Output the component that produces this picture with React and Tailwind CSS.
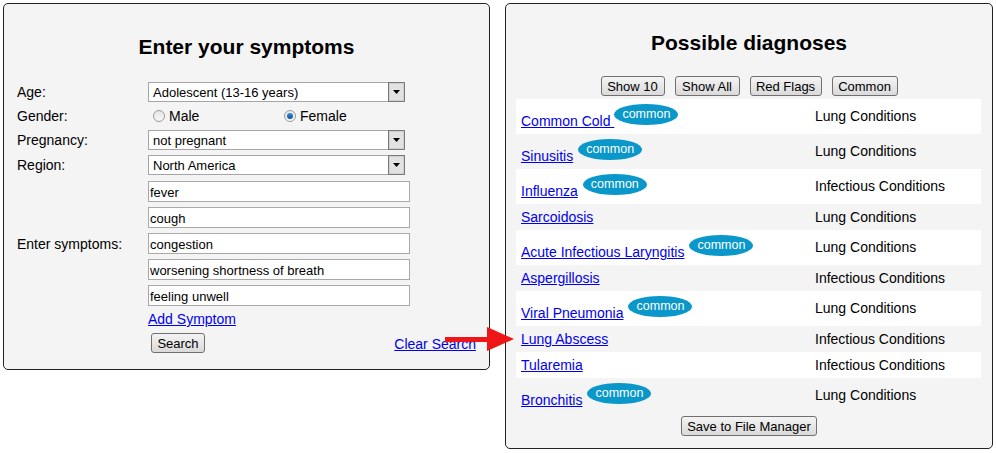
import React from "react";

const rows = [
  { n: "Common Cold\u00a0", c: true, cat: "Lung Conditions", tight: true },
  { n: "Sinusitis", c: true, cat: "Lung Conditions" },
  { n: "Influenza", c: true, cat: "Infectious Conditions" },
  { n: "Sarcoidosis", cat: "Lung Conditions" },
  { n: "Acute Infectious Laryngitis", c: true, cat: "Lung Conditions" },
  { n: "Aspergillosis", cat: "Infectious Conditions" },
  { n: "Viral Pneumonia", c: true, cat: "Lung Conditions" },
  { n: "Lung Abscess", cat: "Infectious Conditions" },
  { n: "Tularemia", cat: "Infectious Conditions" },
  { n: "Bronchitis", c: true, cat: "Lung Conditions" },
];

function Btn({ children, w }) {
  return (
    <div
      className={`flex h-[20px] items-center justify-center rounded-[3px] border border-[#707070] bg-gradient-to-b from-[#f4f4f4] to-[#dadada] text-[13px] leading-none text-black ${w}`}
    >
      {children}
    </div>
  );
}

function Select({ value }) {
  return (
    <div className="flex h-[20px] w-[257px] items-center border border-[#a5a5a5] bg-white">
      <div className="flex-1 pl-[4px] text-[13px] leading-none text-black">{value}</div>
      <div className="-my-px -mr-px flex h-[20px] w-[17px] items-center justify-center border border-[#7a7a7a] bg-[#e2e2e2] shadow-[inset_0_0_0_1px_#cfcfcf]">
        <svg width="7" height="4" viewBox="0 0 7 4">
          <polygon points="0,0 7,0 3.5,4" fill="#000" />
        </svg>
      </div>
    </div>
  );
}

function Input({ value }) {
  return (
    <div className="flex h-[21px] w-[262px] items-center border border-[#a9a9a9] bg-white pl-[1px] pt-[1px] text-[13px] leading-none text-black">
      {value}
    </div>
  );
}

function Radio({ checked }) {
  return (
    <span className="flex h-[12px] w-[12px] items-center justify-center rounded-full border border-[#9a9a9a] bg-gradient-to-b from-[#e6e6e6] to-[#f8f8f8]">
      {checked && (
        <span className="h-[6px] w-[6px] rounded-full bg-gradient-to-b from-[#3a8fd6] to-[#0d4f95]" />
      )}
    </span>
  );
}

function Label({ children }) {
  return <div className="w-[131px] text-[14px] leading-[16px] text-black">{children}</div>;
}

export default function App() {
  return (
    <div className="relative flex h-[453px] w-[996px] gap-[15px] bg-white pl-[3px] pt-[3px] font-['Liberation_Sans',Arial,sans-serif]">
      {/* Left panel */}
      <div className="h-[367px] w-[487px] rounded-[5px] border border-[#222] bg-[#f4f4f4] pl-[13px] pr-[13px] pt-[31px]">
        <div className="text-center text-[21px] font-bold leading-[24px] text-black">Enter your symptoms</div>
        <div className="mt-[23px] flex items-center">
          <Label>Age:</Label>
          <Select value="Adolescent (13-16 years)" />
        </div>
        <div className="flex h-[28px] items-center">
          <Label>Gender:</Label>
          <div className="flex w-[131px] items-center gap-[4px] pl-[5px] text-[14px] leading-[16px]">
            <Radio />
            <span>Male</span>
          </div>
          <div className="flex items-center gap-[4px] pl-[5px] text-[14px] leading-[16px]">
            <Radio checked />
            <span>Female</span>
          </div>
        </div>
        <div className="flex items-center">
          <Label>Pregnancy:</Label>
          <Select value="not pregnant" />
        </div>
        <div className="mt-[5px] flex items-center">
          <Label>Region:</Label>
          <Select value="North America" />
        </div>
        <div className="mt-[6px] flex items-center">
          <Label>Enter symptoms:</Label>
          <div className="flex flex-col gap-[5px]">
            <Input value="fever" />
            <Input value="cough" />
            <Input value="congestion" />
            <Input value="worsening shortness of breath" />
            <Input value="feeling unwell" />
          </div>
        </div>
        <div className="ml-[131px] mt-[5px] text-[14px] leading-[16px]">
          <a className="text-[#0000ee] underline">Add Symptom</a>
        </div>
        <div className="ml-[131px] mt-[6px] flex items-center justify-between">
          <div className="ml-[3px]">
            <Btn w="w-[54px]">Search</Btn>
          </div>
          <a className="mt-[1px] text-[14px] leading-[16px] text-[#0000ee] underline">Clear Search</a>
        </div>
      </div>

      {/* Right panel */}
      <div className="h-[446px] w-[488px] rounded-[5px] border border-[#222] bg-[#f4f4f4] pl-[10px] pr-[10px] pt-[27px]">
        <div className="text-center text-[21px] font-bold leading-[24px] text-black">Possible diagnoses</div>
        <div className="mt-[21px] flex justify-center gap-[10px]">
          <Btn w="w-[64px]">Show 10</Btn>
          <Btn w="w-[65px]">Show All</Btn>
          <Btn w="w-[72px]">Red Flags</Btn>
          <Btn w="w-[66px]">Common</Btn>
        </div>
        <div className="mt-[3px] w-[465px]">
          {rows.map((r, i) => (
            <div
              key={r.n}
              className={`flex items-center px-[5px] py-[5px] text-[14px] leading-[16px] ${i % 2 === 0 ? "bg-white" : ""}`}
            >
              <div className="flex w-[294px] items-end">
                <a className="text-[#0000ee] underline">{r.n}</a>
                {r.c && (
                  <span
                    className={`mb-[4px] flex h-[21px] w-[64px] items-center justify-center rounded-[50%] bg-[#0a97c9] text-[12.5px] leading-none text-white ${r.tight ? "ml-0" : "ml-[5px]"}`}
                  >
                    common
                  </span>
                )}
              </div>
              <div className={`text-black ${r.c ? "mb-[1px]" : ""}`}>{r.cat}</div>
            </div>
          ))}
        </div>
        <div className="mt-[3px] flex justify-center">
          <Btn w="w-[136px]">Save to File Manager</Btn>
        </div>
      </div>

      {/* Red arrow */}
      <svg className="absolute left-[445px] top-[327px]" width="70" height="25" viewBox="0 0 70 25">
        <rect x="0" y="10" width="43" height="5" fill="#ee1616" />
        <polygon points="42,0 42,24 69,12" fill="#ee1616" />
      </svg>
    </div>
  );
}
